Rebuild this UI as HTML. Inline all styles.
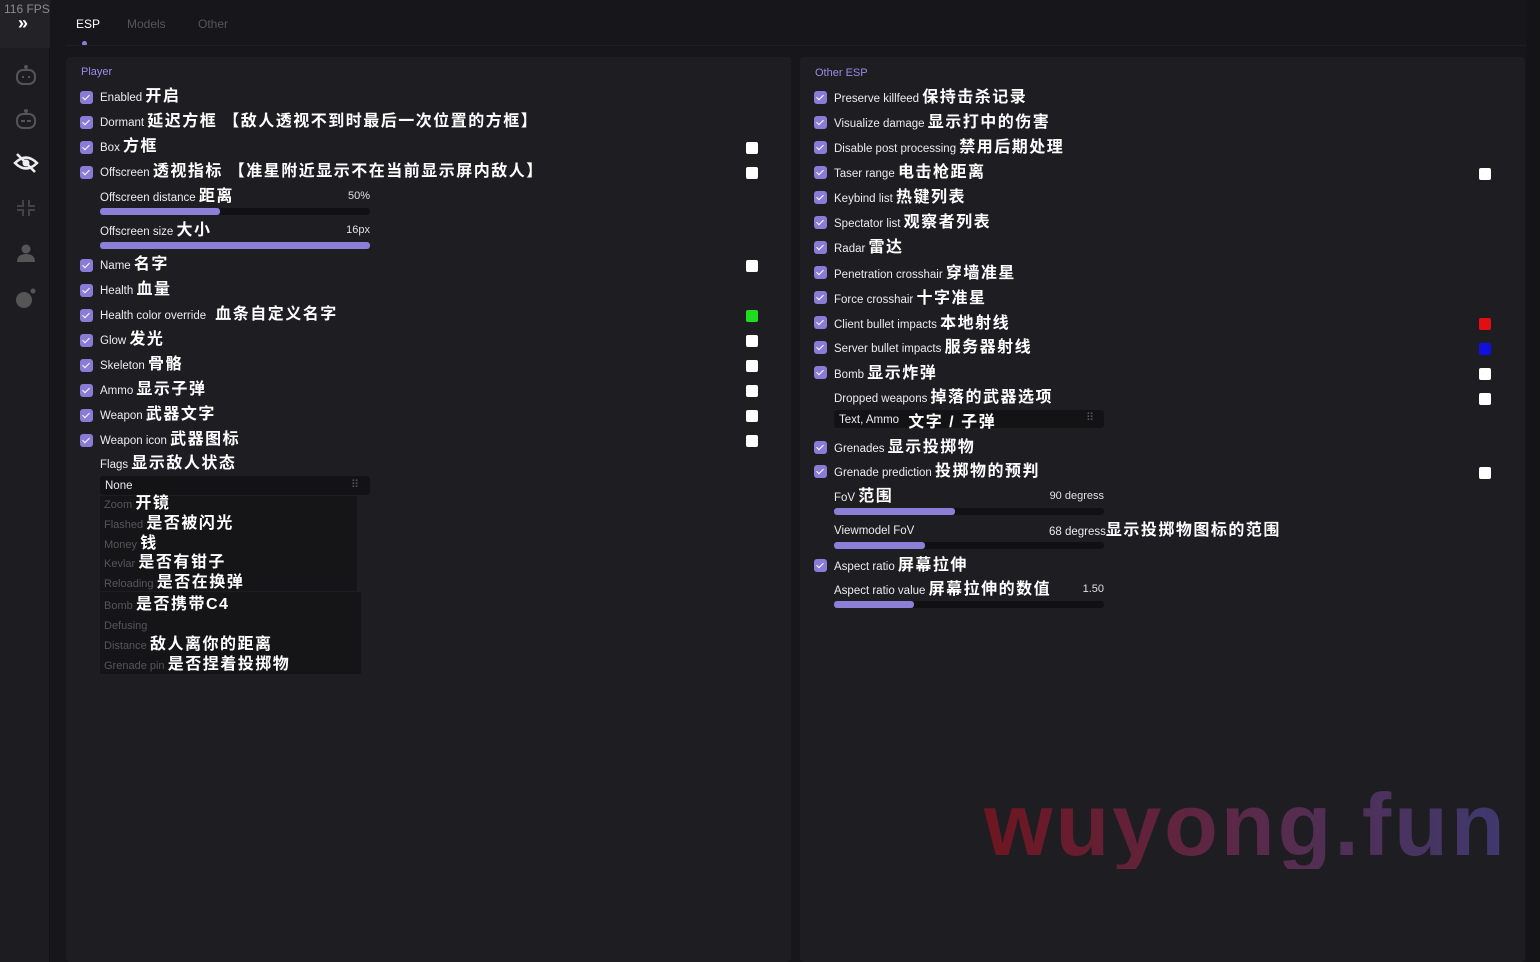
<!DOCTYPE html><html><head><meta charset="utf-8"><style>
*{margin:0;padding:0;box-sizing:border-box}
html,body{width:1540px;height:962px;overflow:hidden}
body{background:#17171b;font-family:"Liberation Sans","Noto Sans CJK SC",sans-serif;color:#e8e8ec;position:relative}
.a{position:absolute;white-space:nowrap}
.side{left:0;top:0;width:50px;height:962px;background:#1d1d21;border-right:1px solid #121215}
.pan{background:#1e1e22;border-radius:4px}
.cb{position:absolute;width:13px;height:13px;border-radius:3px;background:#8a7bd6}
.cb:after{content:"";position:absolute;left:4px;top:2px;width:3px;height:6px;border:solid #fff;border-width:0 1.5px 1.5px 0;transform:rotate(45deg)}
.t{position:absolute;font-size:11.5px;color:#ececf0;white-space:nowrap;line-height:16px}
.t b{font-size:16px;font-weight:bold;letter-spacing:1.5px;color:#fff}
.sq{position:absolute;width:12px;height:12px;border-radius:2px;background:#fff}
.bar{position:absolute;height:7px;background:#111114;border-radius:3px}
.bar i{display:block;height:7px;background:#8c7fd8;border-radius:3px}
.v{position:absolute;font-size:11px;color:#e0e0e4;text-align:right}
.dim{color:#55555c;font-size:11px}
</style></head><body>
<div class="a side"></div>
<div class="a" style="left:0;top:0;width:50px;height:48px;background:#232327"></div>
<div class="a" style="left:4px;top:2px;font-size:12px;color:#8a8a90">116 FPS</div>
<div class="a" style="left:18px;top:13px;font-size:18px;line-height:20px;color:#fff;font-weight:bold">»</div>
<svg class="a" style="left:14px;top:64px" width="24" height="22" viewBox="0 0 24 22"><circle cx="12" cy="3" r="2" fill="#555"/><rect x="3" y="6" width="18" height="14" rx="6" fill="none" stroke="#555" stroke-width="2"/><rect x="8" y="12" width="2" height="2" fill="#555"/><rect x="14" y="12" width="2" height="2" fill="#555"/></svg>
<svg class="a" style="left:14px;top:108px" width="24" height="22" viewBox="0 0 24 22"><circle cx="12" cy="3" r="2" fill="#555"/><rect x="3" y="6" width="18" height="14" rx="6" fill="none" stroke="#555" stroke-width="2"/><path d="M7 13h4M13 13h4" stroke="#555" stroke-width="2"/></svg>
<svg class="a" style="left:13px;top:152px" width="26" height="22" viewBox="0 0 26 22"><path d="M2 11Q13 0 24 11Q13 22 2 11Z" fill="none" stroke="#eee" stroke-width="2.5"/><circle cx="13" cy="11" r="3.5" fill="#eee"/><path d="M4 2L22 20" stroke="#eee" stroke-width="2.5"/></svg>
<svg class="a" style="left:17px;top:200px" width="18" height="16" viewBox="0 0 18 16"><path d="M6 0v6H0M12 0v6h6M6 16v-6H0M12 16v-6h6" fill="none" stroke="#444" stroke-width="2"/></svg>
<svg class="a" style="left:16px;top:243px" width="20" height="20" viewBox="0 0 20 20"><circle cx="10" cy="6" r="4.5" fill="#555"/><path d="M1 19Q1 11 10 11Q19 11 19 19Z" fill="#555"/></svg>
<svg class="a" style="left:14px;top:287px" width="24" height="22" viewBox="0 0 24 22"><circle cx="10" cy="13" r="8" fill="#555"/><circle cx="19" cy="4" r="2.5" fill="#555"/></svg>
<div class="a" style="left:76px;top:17px;font-size:12px;color:#fff">ESP</div>
<div class="a" style="left:82px;top:41px;width:5px;height:5px;border-radius:3px;background:#8c7fd8"></div>
<div class="a" style="left:127px;top:17px;font-size:12px;color:#55555c">Models</div>
<div class="a" style="left:198px;top:17px;font-size:12px;color:#55555c">Other</div>
<div class="a" style="left:66px;top:45px;width:1460px;height:1px;background:#202024"></div>
<div class="a pan" style="left:66px;top:57px;width:725px;height:905px"></div>
<div class="a pan" style="left:800px;top:57px;width:725px;height:905px"></div>
<div class="a" style="left:1526px;top:0;width:14px;height:962px;background:#141417"></div>
<div class="a" style="left:81px;top:66px;font-size:11px;color:#9b8be8">Player</div>
<div class="a" style="left:815px;top:67px;font-size:11px;color:#9b8be8">Other ESP</div>

<div class="cb" style="left:80px;top:91px"></div><div class="t" style="left:100px;top:89px">Enabled <b>开启</b></div>
<div class="cb" style="left:80px;top:116px"></div><div class="t" style="left:100px;top:114px">Dormant <b>延迟方框 【敌人透视不到时最后一次位置的方框】</b></div>
<div class="cb" style="left:80px;top:141px"></div><div class="t" style="left:100px;top:139px">Box <b>方框</b></div>
<div class="cb" style="left:80px;top:166px"></div><div class="t" style="left:100px;top:164px">Offscreen <b>透视指标 【准星附近显示不在当前显示屏内敌人】</b></div>
<div class="t" style="left:100px;top:189px">Offscreen distance <b>距离</b></div><div class="v" style="left:330px;top:190px;width:40px">50%</div>
<div class="bar" style="left:100px;top:208px;width:270px"><i style="width:120px"></i></div>
<div class="t" style="left:100px;top:223px">Offscreen size <b>大小</b></div><div class="v" style="left:330px;top:224px;width:40px">16px</div>
<div class="bar" style="left:100px;top:242px;width:270px"><i style="width:270px"></i></div>
<div class="cb" style="left:80px;top:259px"></div><div class="t" style="left:100px;top:257px">Name <b>名字</b></div>
<div class="cb" style="left:80px;top:284px"></div><div class="t" style="left:100px;top:282px">Health <b>血量</b></div>
<div class="cb" style="left:80px;top:309px"></div><div class="t" style="left:100px;top:307px">Health color override <b>&nbsp;血条自定义名字</b></div>
<div class="cb" style="left:80px;top:334px"></div><div class="t" style="left:100px;top:332px">Glow <b>发光</b></div>
<div class="cb" style="left:80px;top:359px"></div><div class="t" style="left:100px;top:357px">Skeleton <b>骨骼</b></div>
<div class="cb" style="left:80px;top:384px"></div><div class="t" style="left:100px;top:382px">Ammo <b>显示子弹</b></div>
<div class="cb" style="left:80px;top:409px"></div><div class="t" style="left:100px;top:407px">Weapon <b>武器文字</b></div>
<div class="cb" style="left:80px;top:434px"></div><div class="t" style="left:100px;top:432px">Weapon icon <b>武器图标</b></div>
<div class="t" style="left:100px;top:456px">Flags <b>显示敌人状态</b></div>
<div class="a" style="left:100px;top:476px;width:270px;height:19px;background:#131316;border-radius:3px"></div>
<div class="t" style="left:105px;top:478px">None</div><div class="a dim" style="left:351px;top:478px">⠿</div>
<div class="a" style="left:100px;top:496px;width:257px;height:95px;background:#151518"></div>
<div class="a" style="left:100px;top:592px;width:261px;height:82px;background:#151518"></div>
<div class="t" style="left:104px;top:496px"><span class="dim">Zoom</span> <b>开镜</b></div>
<div class="t" style="left:104px;top:516px"><span class="dim">Flashed</span> <b>是否被闪光</b></div>
<div class="t" style="left:104px;top:536px"><span class="dim">Money</span> <b>钱</b></div>
<div class="t" style="left:104px;top:555px"><span class="dim">Kevlar</span> <b>是否有钳子</b></div>
<div class="t" style="left:104px;top:575px"><span class="dim">Reloading</span> <b>是否在换弹</b></div>
<div class="t" style="left:104px;top:597px"><span class="dim">Bomb</span> <b>是否携带C4</b></div>
<div class="t" style="left:104px;top:618px"><span class="dim">Defusing</span></div>
<div class="t" style="left:104px;top:637px"><span class="dim">Distance</span> <b>敌人离你的距离</b></div>
<div class="t" style="left:104px;top:657px"><span class="dim">Grenade pin</span> <b>是否捏着投掷物</b></div>
<div class="sq" style="left:746px;top:142px"></div><div class="sq" style="left:746px;top:167px"></div>
<div class="sq" style="left:746px;top:260px"></div><div class="sq" style="left:746px;top:310px;background:#1fdc1f"></div>
<div class="sq" style="left:746px;top:335px"></div><div class="sq" style="left:746px;top:360px"></div>
<div class="sq" style="left:746px;top:385px"></div><div class="sq" style="left:746px;top:410px"></div>
<div class="sq" style="left:746px;top:435px"></div>

<div class="cb" style="left:814px;top:91px"></div><div class="t" style="left:834px;top:90px">Preserve killfeed <b>保持击杀记录</b></div>
<div class="cb" style="left:814px;top:116px"></div><div class="t" style="left:834px;top:115px">Visualize damage <b>显示打中的伤害</b></div>
<div class="cb" style="left:814px;top:141px"></div><div class="t" style="left:834px;top:140px">Disable post processing <b>禁用后期处理</b></div>
<div class="cb" style="left:814px;top:166px"></div><div class="t" style="left:834px;top:165px">Taser range <b>电击枪距离</b></div>
<div class="cb" style="left:814px;top:191px"></div><div class="t" style="left:834px;top:190px">Keybind list <b>热键列表</b></div>
<div class="cb" style="left:814px;top:216px"></div><div class="t" style="left:834px;top:215px">Spectator list <b>观察者列表</b></div>
<div class="cb" style="left:814px;top:241px"></div><div class="t" style="left:834px;top:240px">Radar <b>雷达</b></div>
<div class="cb" style="left:814px;top:266px"></div><div class="t" style="left:834px;top:266px">Penetration crosshair <b>穿墙准星</b></div>
<div class="cb" style="left:814px;top:291px"></div><div class="t" style="left:834px;top:291px">Force crosshair <b>十字准星</b></div>
<div class="cb" style="left:814px;top:316px"></div><div class="t" style="left:834px;top:316px">Client bullet impacts <b>本地射线</b></div>
<div class="cb" style="left:814px;top:341px"></div><div class="t" style="left:834px;top:340px">Server bullet impacts <b>服务器射线</b></div>
<div class="cb" style="left:814px;top:366px"></div><div class="t" style="left:834px;top:366px">Bomb <b>显示炸弹</b></div>
<div class="t" style="left:834px;top:390px">Dropped weapons <b>掉落的武器选项</b></div>
<div class="a" style="left:834px;top:410px;width:270px;height:18px;background:#131316;border-radius:3px"></div>
<div class="t" style="left:839px;top:411px">Text, Ammo <b style="position:relative;top:4px">&nbsp;文字 / 子弹</b></div><div class="a dim" style="left:1086px;top:411px">⠿</div>
<div class="cb" style="left:814px;top:441px"></div><div class="t" style="left:834px;top:440px">Grenades <b>显示投掷物</b></div>
<div class="cb" style="left:814px;top:465px"></div><div class="t" style="left:834px;top:464px">Grenade prediction <b>投掷物的预判</b></div>
<div class="t" style="left:834px;top:489px">FoV <b>范围</b></div><div class="v" style="left:1024px;top:490px;width:80px">90 degress</div>
<div class="bar" style="left:834px;top:508px;width:270px"><i style="width:121px"></i></div>
<div class="t" style="left:834px;top:523px">Viewmodel FoV</div><div class="t" style="left:1049px;top:523px">68 degress<b>显示投掷物图标的范围</b></div>
<div class="bar" style="left:834px;top:542px;width:270px"><i style="width:91px"></i></div>
<div class="cb" style="left:814px;top:559px"></div><div class="t" style="left:834px;top:558px">Aspect ratio <b>屏幕拉伸</b></div>
<div class="t" style="left:834px;top:582px">Aspect ratio value <b>屏幕拉伸的数值</b></div><div class="v" style="left:1064px;top:583px;width:40px">1.50</div>
<div class="bar" style="left:834px;top:601px;width:270px"><i style="width:80px"></i></div>
<div class="sq" style="left:1479px;top:168px"></div><div class="sq" style="left:1479px;top:318px;background:#e01010"></div>
<div class="sq" style="left:1479px;top:343px;background:#1010e0"></div><div class="sq" style="left:1479px;top:368px"></div>
<div class="sq" style="left:1479px;top:393px"></div><div class="sq" style="left:1479px;top:467px"></div>

<div class="a" style="left:984px;top:781px;width:535px;font-size:88px;line-height:88px;font-weight:bold;font-family:'Liberation Sans',sans-serif;letter-spacing:3px;background:linear-gradient(90deg,#6e1620,#5a2a4a 50%,#3d3a70);-webkit-background-clip:text;background-clip:text;color:transparent">wuyong.fun</div>
</body></html>
